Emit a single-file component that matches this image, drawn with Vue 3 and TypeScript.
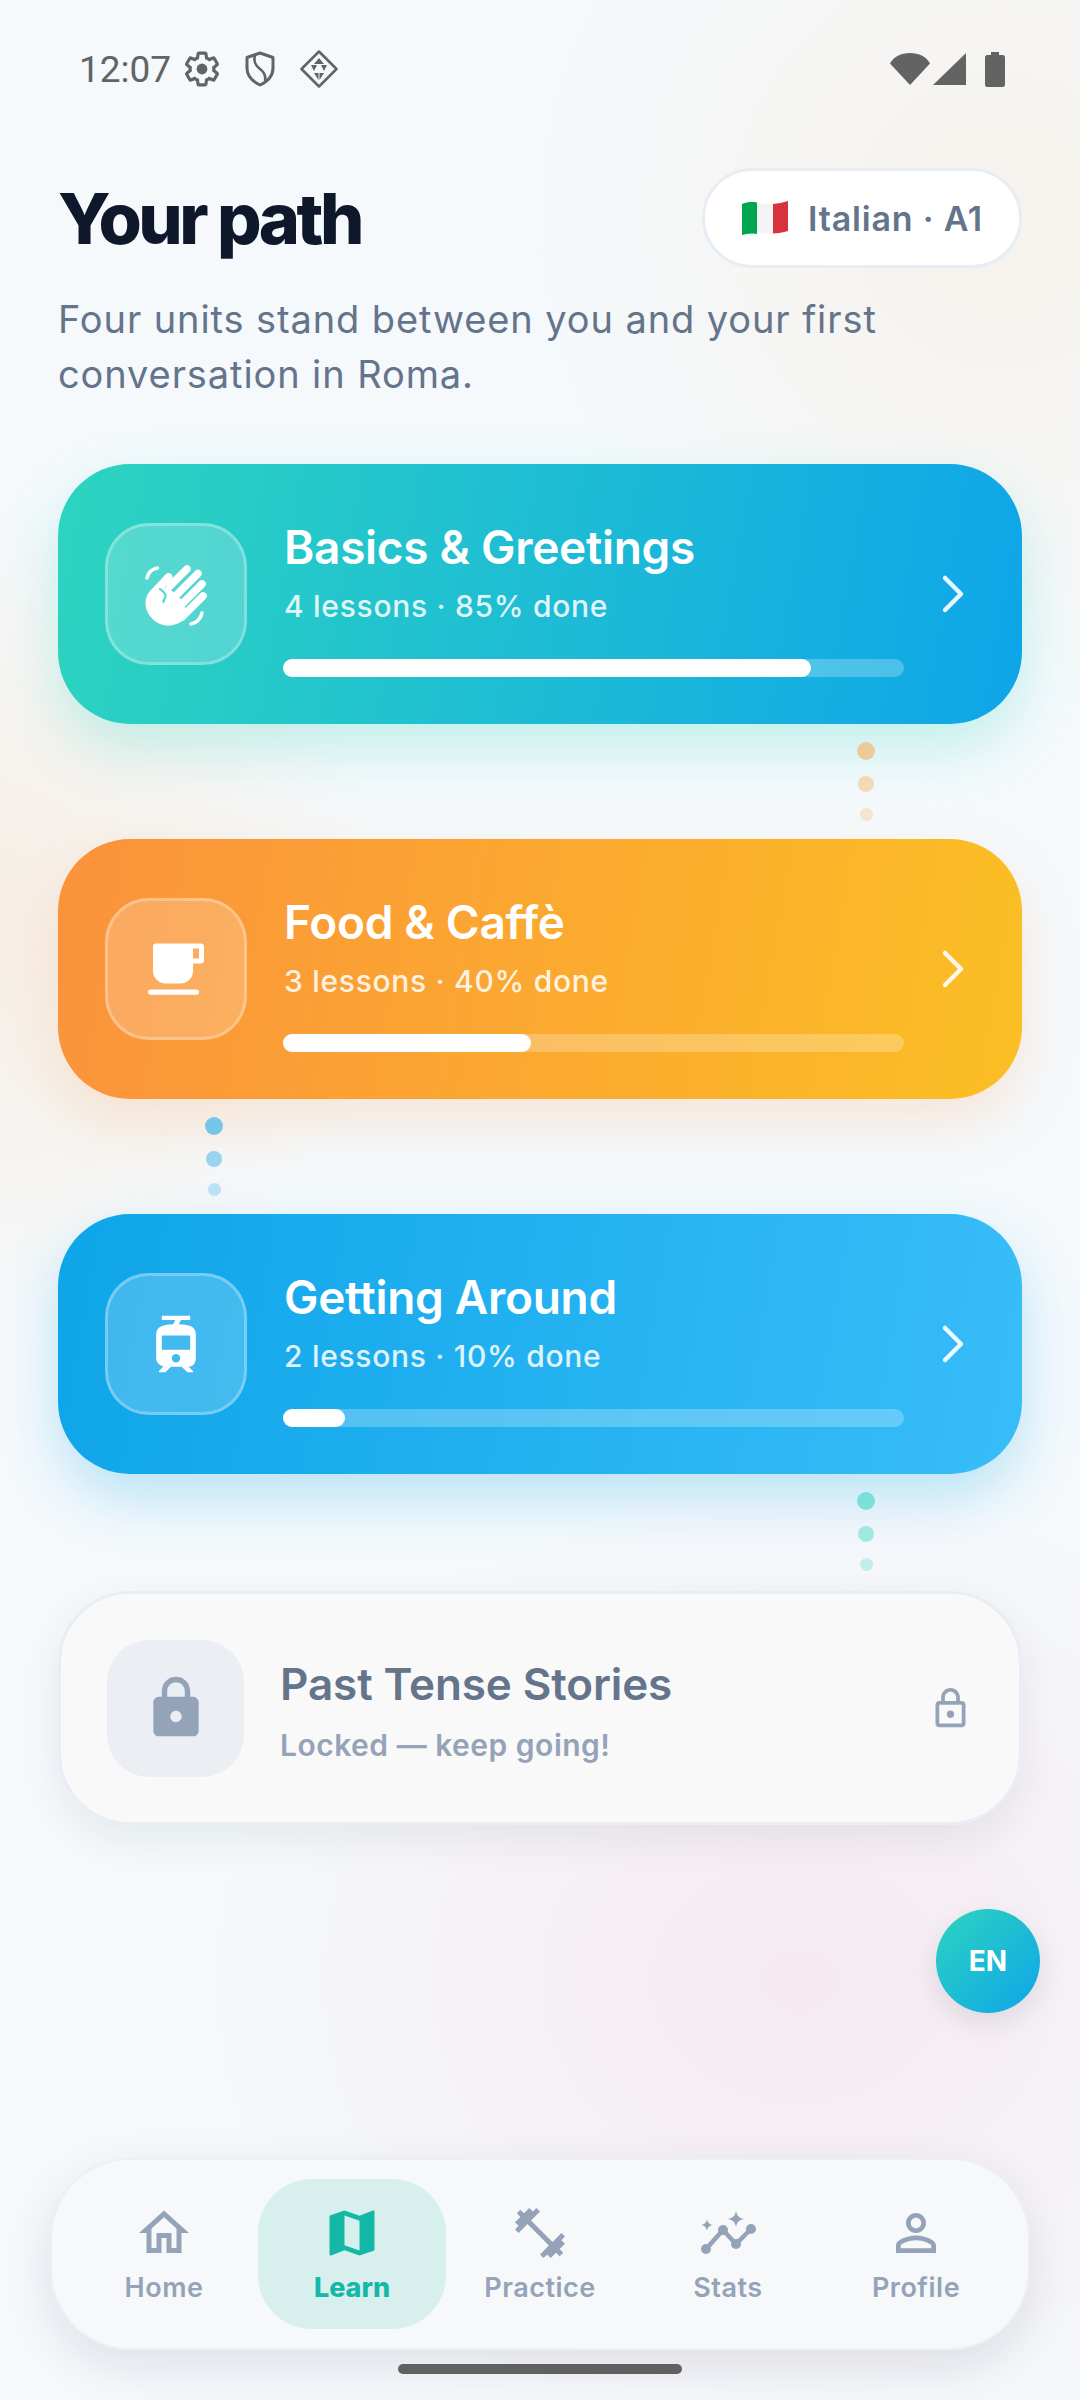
<template>
  <div class="page">
    <header class="status">
      <span class="time">12:07</span>
      <svg class="st-gear" viewBox="0 0 24 24" width="38" height="38">
        <path fill="none" stroke="#636363" stroke-width="2" d="M19.43 12.98c.04-.32.07-.64.07-.98s-.03-.66-.07-.98l2.11-1.65c.19-.15.24-.42.12-.64l-2-3.46c-.12-.22-.39-.3-.61-.22l-2.49 1c-.52-.4-1.08-.73-1.69-.98l-.38-2.65C14.46 2.18 14.25 2 14 2h-4c-.25 0-.46.18-.49.42l-.38 2.65c-.61.25-1.17.59-1.69.98l-2.49-1c-.23-.09-.49 0-.61.22l-2 3.46c-.13.22-.07.49.12.64l2.11 1.65c-.04.32-.07.65-.07.98s.03.66.07.98l-2.11 1.65c-.19.15-.24.42-.12.64l2 3.46c.12.22.39.3.61.22l2.49-1c.52.4 1.08.73 1.69.98l.38 2.65c.03.24.24.42.49.42h4c.25 0 .46-.18.49-.42l.38-2.65c.61-.25 1.17-.59 1.69-.98l2.49 1c.23.09.49 0 .61-.22l2-3.46c.12-.22.07-.49-.12-.64l-2.11-1.65z" />
        <circle cx="12" cy="12" r="3.4" fill="#636363" />
      </svg>
      <svg class="st-shield" viewBox="0 0 30 36" width="30" height="36">
        <path fill="none" stroke="#636363" stroke-width="3" stroke-linejoin="round" d="M15 2 28 6.5V17c0 8-5.5 13.500-13 17C7.500 30.500 2 25 2 17V6.500Z" />
        <path fill="none" stroke="#636363" stroke-width="2.600" d="M10 4.500C8 11 11 15 15 18s6 7 5 12" />
      </svg>
      <svg class="st-diamond" viewBox="0 0 38 38" width="38" height="38">
        <path fill="none" stroke="#636363" stroke-width="2.500" stroke-linejoin="round" d="M19 1.500 36.500 19 19 36.500 1.500 19Z" />
        <path fill="#636363" d="M19 8l5 6h-10zM11 15h6l-3 6zM21 15h6l-3 6zM14 23h4.500v7zM19.500 23H24l-4.500 7z" />
      </svg>
      <span class="st-gap"></span>
      <svg viewBox="0 0 40 34" width="40" height="34">
        <path fill="#636363" d="M0 11.500C3.500 5 11 1 20 1s16.500 4 20 10.500L20 33Z" />
      </svg>
      <svg class="st-signal" viewBox="0 0 33 32" width="33" height="32">
        <path fill="#636363" d="M33 0v32H0Z" />
      </svg>
      <svg class="st-battery" viewBox="0 0 20 35" width="20" height="35">
        <path fill="#636363" d="M6 0h8v3h3.500A2.500 2.500 0 0 1 20 5.500V32.500A2.500 2.500 0 0 1 17.500 35H2.500A2.500 2.500 0 0 1 0 32.500V5.500A2.500 2.500 0 0 1 2.500 3H6Z" />
      </svg>
    </header>

    <section class="heading">
      <h1>Your path</h1>
      <div class="pill">
        <svg viewBox="0 0 46 34" width="46" height="34">
          <path fill="#00a651" d="M0 3c5-2 10-2.500 15-1.500V33c-5-1-10-.5-15 1Z" />
          <path fill="#f4f4f4" d="M15 1.500c5 1 10.500 2 16 1.500V32.500c-5.500 .5-11-.5-16-1.500Z" />
          <path fill="#d9323c" d="M31 3c5-.5 10-1.500 15-3V30c-5 1.500-10 2.500-15 2.500Z" />
        </svg>
        <span>Italian · A1</span>
      </div>
    </section>
    <p class="intro">Four units stand between you and your first<br />conversation in Roma.</p>

    <main class="units">
      <template v-for="unit in units" :key="unit.title">
        <article class="card" :class="unit.tone">
          <div class="tile">
            <svg v-if="unit.tone === 'teal'" viewBox="0 0 72 72" width="72" height="72">
              <g fill="none" stroke="#fff" stroke-linecap="round">
                <path stroke-width="3.500" d="M7 20c1-5 5-9 10.500-10M51 66c5-1 9.500-5 11-11" />
                <path stroke-width="7.500" d="M47 11 30 28M58 15.500 35 38.500M62 26 39 49M63 38 42 59" />
              </g>
              <path fill="#fff" d="M26 16c2-2 5-1 6 1s.5 4-1 5.500l-6 6 3 4 22 22-7 8c-9 7-22 7-30-1C4 53 3 41 10 33Z" />
              <path fill="#fff" d="M27 28 44 44 38 62 12 50Z" />
              <path fill="none" stroke="#55d8d0" stroke-width="2.200" stroke-linecap="round" d="M20 31c2 2 5 3 5.500 6s-2.500 5-2 7" />
            </svg>
            <svg v-else-if="unit.tone === 'amber'" viewBox="0 0 72 72" width="72" height="72">
              <path fill="#fff" fill-rule="evenodd" d="M16 10.500h44.500a3.500 3.500 0 0 1 3.500 3.500v13a3.500 3.500 0 0 1-3.500 3.500H53V38a12.500 12.500 0 0 1-12.500 12.500H25.500A12.500 12.500 0 0 1 13 38V13.500a3 3 0 0 1 3-3ZM53 15.500v10h6v-10Z" />
              <rect x="8" y="56.500" width="51" height="5.200" rx="2.600" fill="#fff" />
            </svg>
            <svg v-else viewBox="0 0 24 24" width="68" height="68">
              <path fill="#fff" d="M19 16.940V8.500c0-2.790-2.610-3.400-6.010-3.490l.76-1.510H17V2H7v1.500h4.750l-.76 1.520C7.860 5.110 5 5.730 5 8.500v8.440c0 1.450 1.190 2.660 2.590 2.970L6 21.500v.5h2.230l2-2H14l2 2h2v-.5L16.500 20h-.08c1.690 0 2.580-1.370 2.580-3.060zm-7 1.560c-.83 0-1.500-.67-1.500-1.500s.67-1.500 1.500-1.500 1.500.67 1.500 1.500-.67 1.500-1.500 1.500zm5-4.500H7V9h10v5z" />
            </svg>
          </div>
          <div class="body">
            <h2>{{ unit.title }}</h2>
            <p>{{ unit.lessons }} lessons · {{ unit.done }}% done</p>
            <div class="track">
              <div class="fill" :style="{ width: unit.done + '%' }"></div>
            </div>
          </div>
          <svg class="chev" viewBox="0 0 36 40" width="36" height="40">
            <path fill="none" stroke="#fff" stroke-opacity=".9" stroke-width="4.500" stroke-linecap="round" stroke-linejoin="round" d="M5 4 21 20 5 36" />
          </svg>
        </article>
        <div class="dots" :class="[unit.side, unit.dotTone]">
          <i></i>
          <i></i>
          <i></i>
        </div>
      </template>

      <article class="card locked">
        <div class="tile">
          <svg viewBox="0 0 24 24" width="68" height="68">
            <path fill="#94a3b8" d="M18 8h-1V6c0-2.760-2.240-5-5-5S7 3.240 7 6v2H6c-1.100 0-2 .9-2 2v10c0 1.100.9 2 2 2h12c1.100 0 2-.9 2-2V10c0-1.100-.9-2-2-2zm-6 9c-1.100 0-2-.9-2-2s.9-2 2-2 2 .9 2 2-.9 2-2 2zm3.100-9H8.900V6c0-1.710 1.390-3.100 3.100-3.100 1.710 0 3.100 1.390 3.100 3.100v2z" />
          </svg>
        </div>
        <div class="body">
          <h2>Past Tense Stories</h2>
          <p>Locked — keep going!</p>
        </div>
        <svg viewBox="0 0 24 24" width="45" height="45">
          <path fill="#94a3b8" d="M18 8h-1V6c0-2.760-2.240-5-5-5S7 3.240 7 6v2H6c-1.100 0-2 .9-2 2v10c0 1.100.9 2 2 2h12c1.100 0 2-.9 2-2V10c0-1.100-.9-2-2-2zM9 6c0-1.660 1.340-3 3-3s3 1.340 3 3v2H9V6zm9 14H6V10h12v10zm-6-3c1.100 0 2-.9 2-2s-.9-2-2-2-2 .9-2 2 .9 2 2 2z" />
        </svg>
      </article>
    </main>

    <button class="fab">EN</button>

    <nav class="tabs">
      <div v-for="tab in tabs" :key="tab.label" class="tab" :class="{ active: tab.active }">
        <svg v-if="tab.d" viewBox="0 0 24 24" width="60" height="60">
          <path :d="tab.d" />
        </svg>
        <svg v-else viewBox="0 0 60 60" width="60" height="60">
          <path d="M38 8c1 5 3 7 8 8-5 1-7 3-8 8-1-5-3-7-8-8 5-1 7-3 8-8ZM9 16c.6 3.500 2 5.200 6 6-4 .8-5.400 2.500-6 6-.6-3.500-2-5.200-6-6 4-.8 5.400-2.500 6-6Z" />
          <path class="stats-line" d="M8 46 25 27 38 41 53 26" />
          <circle cx="8" cy="46" r="5" />
          <circle cx="25" cy="27" r="5" />
          <circle cx="38" cy="41" r="5" />
          <circle cx="53" cy="26" r="5" />
        </svg>
        <span>{{ tab.label }}</span>
      </div>
    </nav>
    <div class="home-bar"></div>
  </div>
</template>

<script setup lang="ts">
type Unit = {
  title: string
  lessons: number
  done: number
  tone: 'teal' | 'amber' | 'sky'
  side: 'left' | 'right'
  dotTone: string
}

type Tab = { label: string; d?: string; active?: boolean }

const units: Unit[] = [
  { title: 'Basics & Greetings', lessons: 4, done: 85, tone: 'teal', side: 'right', dotTone: 'd-amber' },
  { title: 'Food & Caffè', lessons: 3, done: 40, tone: 'amber', side: 'left', dotTone: 'd-sky' },
  { title: 'Getting Around', lessons: 2, done: 10, tone: 'sky', side: 'right', dotTone: 'd-teal' },
]

const tabs: Tab[] = [
  { label: 'Home', d: 'M12 5.690l5 4.500V18h-2v-6H9v6H7v-7.810l5-4.500M12 3L2 12h3v8h6v-6h2v6h6v-8h3L12 3z' },
  {
    label: 'Learn',
    active: true,
    d: 'M20.500 3l-.16.03L15 5.100 9 3 3.360 4.900c-.21.07-.36.25-.36.48V20.500c0 .28.22.5.5.5l.16-.03L9 18.900l6 2.100 5.640-1.900c.21-.07.36-.25.36-.48V3.500c0-.28-.22-.5-.5-.5zM15 19l-6-2.110V5l6 2.110V19z',
  },
  {
    label: 'Practice',
    d: 'M20.570 14.860L22 13.430 20.570 12 17 15.570 8.430 7 12 3.430 10.570 2 9.140 3.430 7.710 2 5.570 4.140 4.140 2.710 2.710 4.140l1.430 1.430L2 7.710l1.430 1.430L2 10.570 3.430 12 7 8.430 15.570 17 12 20.570 13.430 22l1.430-1.430L16.290 22l2.140-2.140 1.430 1.430 1.430-1.430-1.430-1.430L22 16.290z',
  },
  { label: 'Stats' },
  {
    label: 'Profile',
    d: 'M12 5.900c1.160 0 2.100.94 2.100 2.100s-.94 2.100-2.100 2.100S9.900 9.160 9.900 8s.94-2.100 2.100-2.100m0 9c2.970 0 6.100 1.460 6.100 2.100v1.100H5.900V17c0-.64 3.130-2.100 6.100-2.100M12 4C9.790 4 8 5.790 8 8s1.790 4 4 4 4-1.790 4-4-1.790-4-4-4zm0 9c-2.670 0-8 1.340-8 4v3h16v-3c0-2.660-5.330-4-8-4z',
  },
]
</script>

<style>
html,
body {
  margin: 0;
  background: #f5f9fc;
}
</style>

<style scoped>
* {
  box-sizing: border-box;
}
.page {
  position: relative;
  width: 1080px;
  height: 2400px;
  overflow: hidden;
  display: flex;
  flex-direction: column;
  font-family: Inter, "Noto Sans", sans-serif;
  background:
    radial-gradient(circle 480px at 1000px 220px, rgba(250, 226, 200, 0.3), transparent),
    radial-gradient(circle 420px at -20px 920px, rgba(252, 205, 160, 0.26), transparent),
    radial-gradient(ellipse 600px 500px at 800px 1980px, rgba(246, 205, 220, 0.34), transparent),
    #f5f9fc;
}

.status {
  height: 90px;
  padding: 48px 75px 0 79px;
  display: flex;
  align-items: center;
  color: #636363;
}
.time {
  font-family: Roboto, sans-serif;
  font-size: 37px;
  width: 92px;
  margin-right: 12px;
}
.st-gear {
  margin-right: 24px;
}
.st-shield {
  margin-right: 25px;
}
.st-gap {
  flex: 1;
}
.st-signal {
  margin-left: 3px;
}
.st-battery {
  margin-left: 19px;
}

.heading {
  margin-top: 78px;
  padding: 0 58px;
  height: 100px;
  display: flex;
  align-items: center;
  justify-content: space-between;
}
h1 {
  margin: 0;
  font-size: 70px;
  font-weight: 800;
  letter-spacing: -3.500px;
  color: #0f172a;
}
.pill {
  width: 320px;
  height: 100px;
  padding-left: 37px;
  display: flex;
  align-items: center;
  gap: 20px;
  background: #fff;
  border: 3px solid #e6edf4;
  border-radius: 50px;
  font-size: 34px;
  font-weight: 600;
  letter-spacing: 0.800px;
  color: #64748b;
}

.intro {
  margin: 24px 58px 62px;
  font-size: 38px;
  line-height: 55px;
  letter-spacing: 0.900px;
  color: #64748b;
}

.units {
  padding: 0 58px;
  display: flex;
  flex-direction: column;
}
.card {
  height: 260px;
  padding: 0 46px 0 47px;
  display: flex;
  align-items: center;
  gap: 36px;
  border-radius: 72px;
  color: #fff;
}
.teal {
  background: linear-gradient(100deg, #2dd4bf, #0ea5e9);
  box-shadow: 0 24px 56px rgba(45, 212, 191, 0.26);
}
.amber {
  background: linear-gradient(100deg, #fb923c, #fbbf24);
  box-shadow: 0 24px 56px rgba(251, 146, 60, 0.18);
}
.sky {
  background: linear-gradient(100deg, #0ea5e9, #38bdf8);
  box-shadow: 0 24px 56px rgba(14, 165, 233, 0.26);
}
.tile {
  flex: none;
  width: 142px;
  height: 142px;
  display: flex;
  align-items: center;
  justify-content: center;
  background: rgba(255, 255, 255, 0.2);
  border: 3px solid rgba(255, 255, 255, 0.28);
  border-radius: 44px;
}
.body {
  flex: 1;
  padding-top: 7px;
}
.body h2 {
  margin: 0 0 0 1px;
  height: 56px;
  line-height: 56px;
  font-size: 46px;
  font-weight: 600;
  letter-spacing: -0.300px;
}
.body p {
  margin: 11px 0 0 1px;
  height: 40px;
  line-height: 40px;
  font-size: 30px;
  font-weight: 500;
  letter-spacing: 0.700px;
  opacity: 0.85;
}
.track {
  margin-top: 33px;
  height: 18px;
  border-radius: 9px;
  background: rgba(255, 255, 255, 0.25);
}
.fill {
  height: 100%;
  border-radius: 9px;
  background: #fff;
}

.dots {
  height: 115px;
  padding-top: 18px;
  display: flex;
  flex-direction: column;
  align-items: center;
  gap: 16px;
  width: 18px;
}
.dots.right {
  margin-left: 799px;
}
.dots.left {
  margin-left: 147px;
}
.dots i {
  display: block;
  width: 18px;
  height: 18px;
  border-radius: 50%;
  background: currentColor;
  opacity: 0.55;
}
.dots i:nth-child(2) {
  width: 16px;
  height: 16px;
  opacity: 0.4;
}
.dots i:nth-child(3) {
  width: 13px;
  height: 13px;
  opacity: 0.25;
}
.d-amber {
  color: #f8a94e;
}
.d-sky {
  color: #0ea5e9;
}
.d-teal {
  color: #2dd4bf;
}

.locked {
  height: 234px;
  margin-top: 2px;
  padding: 0 46px;
  gap: 35px;
  background: rgba(249, 249, 250, 0.95);
  border: 3px solid #e8eef4;
  box-shadow: 0 14px 40px rgba(15, 23, 42, 0.07);
}
.locked .tile {
  width: 137px;
  height: 137px;
  border: 0;
  border-radius: 42px;
  background: #ebeef3;
}
.locked .body {
  padding-top: 4px;
}
.locked .body h2 {
  font-size: 44px;
  letter-spacing: -0.100px;
  color: #64748b;
}
.locked .body p {
  color: #94a3b8;
  opacity: 1;
  margin-top: 13px;
  font-weight: 600;
  letter-spacing: 0.500px;
}

.fab {
  position: absolute;
  left: 936px;
  top: 1909px;
  width: 104px;
  height: 104px;
  padding: 0;
  border: 0;
  border-radius: 50%;
  background: linear-gradient(135deg, #2dd4bf, #0ea5e9);
  box-shadow: 0 10px 28px rgba(15, 23, 42, 0.1);
  font-family: Inter, sans-serif;
  font-size: 28px;
  font-weight: 700;
  color: #fff;
}

.tabs {
  margin: auto 50px 50px;
  height: 192px;
  padding: 0 18px;
  display: flex;
  align-items: center;
  background: #f7f8fa;
  border: 2px solid #eaf0f5;
  border-radius: 80px;
  box-shadow: 0 16px 48px rgba(15, 23, 42, 0.1);
}
.tab {
  flex: 1;
  height: 150px;
  padding-top: 24px;
  display: flex;
  flex-direction: column;
  align-items: center;
  gap: 8px;
  border-radius: 54px;
  color: #94a3b8;
  font-size: 27px;
  line-height: 34px;
  font-weight: 600;
  letter-spacing: 0.500px;
}
.tab svg {
  flex: none;
  fill: currentColor;
}
.stats-line {
  fill: none;
  stroke: currentColor;
  stroke-width: 4.500;
}
.tab.active {
  background: rgba(20, 184, 166, 0.14);
  color: #14b8a6;
  font-weight: 800;
  letter-spacing: 0;
}

.home-bar {
  position: absolute;
  left: 398px;
  top: 2364px;
  width: 284px;
  height: 10px;
  border-radius: 5px;
  background: #616161;
}
</style>
